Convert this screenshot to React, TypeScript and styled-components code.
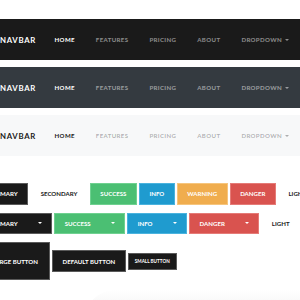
import React from 'react';
import styled, { createGlobalStyle } from 'styled-components';

const GlobalStyle = createGlobalStyle`
  html, body {
    margin: 0;
    padding: 0;
    background: #fff;
    overflow: hidden;
  }
  body {
    font-family: "Lato", "Open Sans", sans-serif;
  }
`;

const Page = styled.div`
  width: 300px;
  height: 300px;
  padding-top: 19px;
  box-sizing: border-box;
  position: relative;
  overflow: hidden;
`;

const themes = {
  dark: { bg: '#1a1a1a', brand: '#fff', active: '#fff', link: 'rgba(255,255,255,0.5)' },
  primary: { bg: '#343a40', brand: '#fff', active: '#fff', link: 'rgba(255,255,255,0.5)' },
  light: { bg: '#f7f8f9', brand: '#1a1a1a', active: '#1a1a1a', link: 'rgba(0,0,0,0.3)' },
};

type NavTheme = keyof typeof themes;

const Bar = styled.nav<{ $theme: NavTheme }>`
  height: 41px;
  margin-bottom: 7px;
  display: flex;
  align-items: center;
  background: ${p => themes[p.$theme].bg};
`;

const Brand = styled.div<{ $theme: NavTheme }>`
  font-size: 7.8px;
  font-weight: 700;
  letter-spacing: 0.7px;
  color: ${p => themes[p.$theme].brand};
  margin-right: 8px;
`;

const NavLink = styled.div<{ $theme: NavTheme; $active?: boolean }>`
  font-size: 6.1px;
  font-weight: 700;
  letter-spacing: 0.35px;
  padding: 0 10.5px;
  color: ${p => (p.$active ? themes[p.$theme].active : themes[p.$theme].link)};
  display: flex;
  align-items: center;
`;

const Caret = styled.span<{ $gap?: number }>`
  display: inline-block;
  width: 0;
  height: 0;
  margin-left: ${p => p.$gap ?? 3}px;
  border-left: 2px solid transparent;
  border-right: 2px solid transparent;
  border-top: 2px solid currentColor;
`;

const Navbar: React.FC<{ theme: NavTheme }> = ({ theme }) => (
  <Bar $theme={theme}>
    <Brand $theme={theme}>NAVBAR</Brand>
    <NavLink $theme={theme} $active>HOME</NavLink>
    <NavLink $theme={theme}>FEATURES</NavLink>
    <NavLink $theme={theme}>PRICING</NavLink>
    <NavLink $theme={theme}>ABOUT</NavLink>
    <NavLink $theme={theme}>DROPDOWN<Caret /></NavLink>
  </Bar>
);

const variants = {
  primary: { bg: '#1a1a1a', color: '#fff', edge: '#5a5a5a' },
  secondary: { bg: '#fff', color: '#1a1a1a', edge: '#fff' },
  success: { bg: '#4bbf73', color: '#fff', edge: '#6fd190' },
  info: { bg: '#1f9bcf', color: '#fff', edge: '#4ab3de' },
  warning: { bg: '#f0ad4e', color: '#fff', edge: '#f6c57d' },
  danger: { bg: '#d9534f', color: '#fff', edge: '#e57b77' },
  light: { bg: '#fff', color: '#1a1a1a', edge: '#fff' },
};

type Variant = keyof typeof variants;

const sizes = {
  lg: { h: 38, font: 6.1, pad: 12 },
  md: { h: 21.5, font: 6.1, pad: 10.5 },
  sm: { h: 17, font: 4.6, pad: 7 },
};

const Btn = styled.div<{ $v: Variant; $size?: keyof typeof sizes }>`
  box-sizing: border-box;
  height: ${p => sizes[p.$size ?? 'md'].h}px;
  padding: 0 ${p => sizes[p.$size ?? 'md'].pad}px;
  display: flex;
  align-items: center;
  flex-shrink: 0;
  background: ${p => variants[p.$v].bg};
  color: ${p => variants[p.$v].color};
  box-shadow: inset 0 0 0 1px ${p => variants[p.$v].edge};
  font-size: ${p => sizes[p.$size ?? 'md'].font}px;
  font-weight: 700;
  letter-spacing: 0;
  white-space: nowrap;
`;

const Buttons = styled.div`
  margin-left: -20px;
  margin-top: 27px;
  display: flex;
  flex-direction: column;
  gap: 8px;
`;

const Row = styled.div`
  display: flex;
  align-items: center;
  gap: 2px;
`;

const Fade = styled.div`
  position: absolute;
  left: 85px;
  right: -40px;
  bottom: -20px;
  height: 30px;
  border-radius: 60px 0 0 0;
  background: linear-gradient(to bottom, #fff, #eeeeee);
`;

export default function App() {
  return (
    <Page>
      <GlobalStyle />
      <Navbar theme="dark" />
      <Navbar theme="primary" />
      <Navbar theme="light" />
      <Buttons>
        <Row>
          <Btn $v="primary">PRIMARY</Btn>
          <Btn $v="secondary">SECONDARY</Btn>
          <Btn $v="success">SUCCESS</Btn>
          <Btn $v="info">INFO</Btn>
          <Btn $v="warning">WARNING</Btn>
          <Btn $v="danger">DANGER</Btn>
          <Btn $v="light">LIGHT</Btn>
        </Row>
        <Row>
          <Btn $v="primary">PRIMARY<Caret $gap={20} /></Btn>
          <Btn $v="success">SUCCESS<Caret $gap={20} /></Btn>
          <Btn $v="info">INFO<Caret $gap={20} /></Btn>
          <Btn $v="danger">DANGER<Caret $gap={20} /></Btn>
          <Btn $v="light">LIGHT</Btn>
        </Row>
        <Row>
          <Btn $v="primary" $size="lg">LARGE BUTTON</Btn>
          <Btn $v="primary">DEFAULT BUTTON</Btn>
          <Btn $v="primary" $size="sm">SMALL BUTTON</Btn>
        </Row>
      </Buttons>
      <Fade />
    </Page>
  );
}
